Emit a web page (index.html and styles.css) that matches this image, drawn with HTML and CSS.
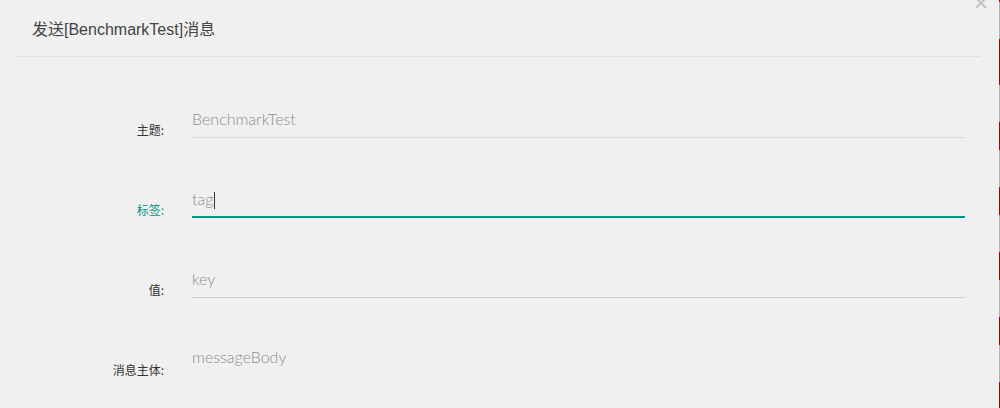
FILE: index.html
```html
<!DOCTYPE html>
<html lang="zh-CN">
<head>
  <meta charset="UTF-8" />
  <meta name="viewport" content="width=device-width, initial-scale=1.0" />
  <title>发送消息</title>
  <link rel="stylesheet" href="styles.css">
</head>
<body>
  <div class="page">
    <div class="modal">
      <div class="modal-header">
        <h2 class="modal-title">发送[BenchmarkTest]消息</h2>
      </div>
      <span class="close">
        <svg width="14" height="14" viewBox="0 0 14 14">
          <path d="M2 2 L12 12 M12 2 L2 12" stroke="#c2c2c2" stroke-width="2" fill="none" />
        </svg>
      </span>

      <div class="form">
        <div class="row">
          <label class="label">主题:</label>
          <div class="field disabled">BenchmarkTest</div>
        </div>
        <div class="row">
          <label class="label focused">标签:</label>
          <div class="field active">tag<span class="caret"></span></div>
        </div>
        <div class="row">
          <label class="label">值:</label>
          <div class="field">key</div>
        </div>
        <div class="row">
          <label class="label">消息主体:</label>
          <div class="field area">messageBody</div>
        </div>
      </div>
    </div>
    <div class="edge"></div>
  </div>
</body>
</html>
```

FILE: styles.css
```css
html, body {
  margin: 0;
  height: 100%;
  overflow: hidden;
}
body {
  background: #f0f0f0;
  font-family: "Liberation Sans", "Noto Sans CJK SC", sans-serif;
  color: #333;
}
.page {
  display: flex;
  height: 100%;
}
.modal {
  flex: 1;
  position: relative;
}
.edge {
  width: 1px;
  background: repeating-linear-gradient(to bottom, #a30000 0, #a30000 28px, #b4b4b4 28px, #b4b4b4 65px);
  background-position: 0 57px;
}
.modal-header {
  margin: 0 18px 0 16px;
  height: 38px;
  padding-top: 18px;
  border-bottom: 1px solid #e1e1e1;
}
.modal-title {
  margin: 0;
  padding-left: 16px;
  font-size: 16px;
  font-weight: normal;
  line-height: 24px;
  color: #444;
}
.close {
  position: absolute;
  top: -4px;
  right: 11px;
  width: 14px;
  height: 14px;
}
.close svg {
  display: block;
}
.form {
  padding-right: 34px;
}
.row {
  display: flex;
  align-items: flex-start;
  margin-top: 44px;
}
.row:first-child {
  margin-top: 45px;
}
.label {
  width: 164px;
  height: 36px;
  flex-shrink: 0;
  display: flex;
  align-items: flex-end;
  justify-content: flex-end;
  font-family: "Noto Sans CJK SC", sans-serif;
  font-size: 12px;
  line-height: 16px;
  color: #333;
}
.label.focused {
  color: #009688;
}
.field {
  flex: 1;
  margin-left: 28px;
  height: 36px;
  box-sizing: border-box;
  line-height: 33px;
  font-family: Lato, "Liberation Sans", sans-serif;
  font-weight: 300;
  font-size: 16px;
  color: #8e8e8e;
  border-bottom: 1px solid #d0d0d0;
}
.field.disabled {
  border-bottom: 1px dotted #c8c8c8;
}
.field.active {
  border-bottom: 2px solid #009688;
}
.field.area {
  height: 80px;
  border-bottom: none;
  line-height: 20px;
  padding-top: 5px;
}
.caret {
  display: inline-block;
  width: 1px;
  height: 17px;
  margin-left: 1px;
  vertical-align: -4px;
  background: #333;
}
```
